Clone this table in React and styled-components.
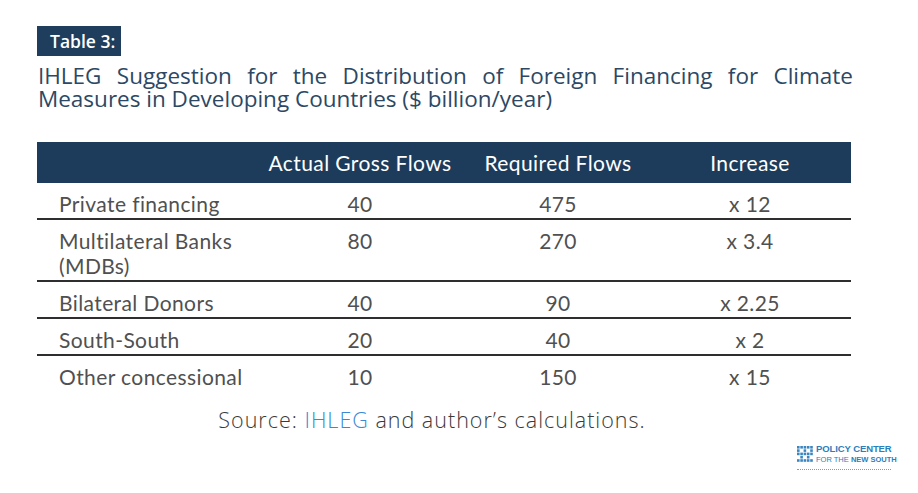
import React from "react";
import styled, { createGlobalStyle } from "styled-components";

const Global = createGlobalStyle`
  html, body { margin: 0; padding: 0; background: #ffffff; }
  body { width: 918px; height: 493px; overflow: hidden; }
`;

const Page = styled.div`
  width: 918px;
  height: 493px;
  box-sizing: border-box;
  padding: 26px 66px 0 37px;
  display: flex;
  flex-direction: column;
  position: relative;
`;

const Tag = styled.div`
  align-self: flex-start;
  width: 84px;
  height: 30px;
  box-sizing: border-box;
  background: #1f3e5e;
  color: #ffffff;
  font-family: "Open Sans", "Noto Sans", sans-serif;
  font-size: 17.5px;
  font-weight: 600;
  line-height: 30px;
  padding-left: 13px;
  white-space: nowrap;
`;

const Title = styled.div`
  margin-top: 8px;
  width: 815px;
  color: #2c4864;
  font-family: "Open Sans", "Noto Sans", sans-serif;
  font-size: 22.5px;
  line-height: 23px;
  padding-left: 1px;
`;

const TitleLine = styled.span`
  display: block;
  text-align: ${(p) => (p.$justify ? "justify" : "left")};
  text-align-last: ${(p) => (p.$justify ? "justify" : "left")};
  white-space: nowrap;
`;

const Table = styled.div`
  margin-top: 32px;
  width: 814px;
  display: grid;
  grid-template-columns: 228px 190px 206px 190px;
  font-family: Lato, "Open Sans", sans-serif;
  font-size: 21px;
  letter-spacing: 0.4px;
`;

const HeadCell = styled.div`
  background: #1d3c5b;
  color: #ffffff;
  height: 41px;
  display: flex;
  align-items: center;
  justify-content: center;
  padding-right: ${(p) => p.$pr || 0}px;
`;

const Cell = styled.div`
  color: #505050;
  line-height: 25px;
  padding: 8px ${(p) => p.$pr || 0}px 2px ${(p) => p.$pl || 0}px;
  text-align: ${(p) => (p.$left ? "left" : "center")};
  border-bottom: ${(p) => (p.$last ? "0" : "2px solid #2e2e2e")};
`;

const Source = styled.div`
  margin-top: 14px;
  width: 790px;
  text-align: center;
  font-family: "Open Sans", "Noto Sans", sans-serif;
  font-weight: 300;
  font-size: 21.5px;
  letter-spacing: 1px;
  color: #3a3a3a;
`;

const Link = styled.span`
  color: #3a8ad3;
`;

const Logo = styled.div`
  position: absolute;
  left: 797px;
  top: 445px;
  display: flex;
  flex-direction: column;
  gap: 5px;
`;

const LogoRow = styled.div`
  display: flex;
  align-items: center;
  gap: 2px;
`;

const LogoText = styled.div`
  display: flex;
  flex-direction: column;
  font-family: "Liberation Sans", Arial, sans-serif;
  color: #2a80bd;
  line-height: 8px;
`;

const LogoBig = styled.span`
  font-size: 9.5px;
  font-weight: 700;
  letter-spacing: -0.1px;
`;

const LogoSmall = styled.span`
  font-size: 7.5px;
  font-weight: ${(p) => (p.$bold ? 700 : 300)};
`;

const LogoLine = styled.div`
  width: 94px;
  height: 0;
  border-top: 1px dotted #8d98a3;
`;

const rows = [
  ["Private financing", "40", "475", "x 12"],
  [
    <>
      Multilateral Banks
      <br />
      (MDBs)
    </>,
    "80",
    "270",
    "x 3.4",
  ],
  ["Bilateral Donors", "40", "90", "x 2.25"],
  ["South-South", "20", "40", "x 2"],
  ["Other concessional", "10", "150", "x 15"],
];

function LogoIcon() {
  const cells = [];
  for (let r = 0; r < 5; r++) {
    for (let c = 0; c < 5; c++) {
      if ((r * 3 + c * 2) % 4 !== 1) {
        cells.push(
          <rect key={`${r}-${c}`} x={c * 3.3} y={r * 3.3} width="2.6" height="2.6" fill="#3b86c0" />
        );
      }
    }
  }
  return (
    <svg width="17" height="17" viewBox="0 0 17 17">
      {cells}
    </svg>
  );
}

export default function App() {
  return (
    <>
      <Global />
      <Page>
        <Tag>Table 3:</Tag>
        <Title>
          <TitleLine $justify>
            IHLEG Suggestion for the Distribution of Foreign Financing for Climate
          </TitleLine>
          <TitleLine>Measures in Developing Countries ($ billion/year)</TitleLine>
        </Title>
        <Table>
          <HeadCell />
          <HeadCell>Actual Gross Flows</HeadCell>
          <HeadCell>Required Flows</HeadCell>
          <HeadCell $pr={12}>Increase</HeadCell>
          {rows.map((r, i) => {
            const last = i === rows.length - 1;
            return (
              <React.Fragment key={i}>
                <Cell $left $pl={22} $last={last}>
                  {r[0]}
                </Cell>
                <Cell $last={last}>{r[1]}</Cell>
                <Cell $last={last}>{r[2]}</Cell>
                <Cell $last={last} $pr={12}>
                  {r[3]}
                </Cell>
              </React.Fragment>
            );
          })}
        </Table>
        <Source>
          Source: <Link>IHLEG</Link> and author’s calculations.
        </Source>
        <Logo>
          <LogoRow>
            <LogoIcon />
            <LogoText>
              <LogoBig>POLICY CENTER</LogoBig>
              <span>
                <LogoSmall>FOR THE </LogoSmall>
                <LogoSmall $bold>NEW SOUTH</LogoSmall>
              </span>
            </LogoText>
          </LogoRow>
          <LogoLine />
        </Logo>
      </Page>
    </>
  );
}
